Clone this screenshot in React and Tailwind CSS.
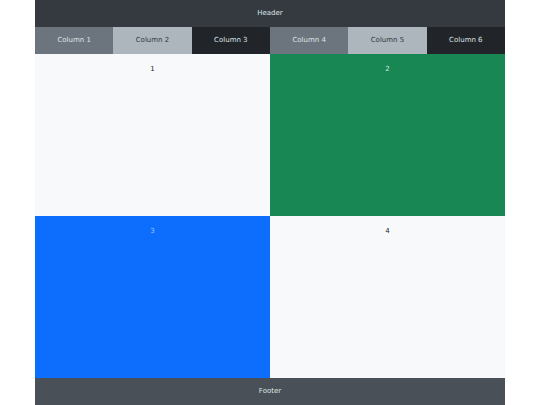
const columns = [
  { label: 'Column 1', cls: 'bg-[#6c757d] text-[#dee2e6]' },
  { label: 'Column 2', cls: 'bg-[#adb5bd] text-[#343a40]' },
  { label: 'Column 3', cls: 'bg-[#212529] text-[#dee2e6]' },
  { label: 'Column 4', cls: 'bg-[#6c757d] text-[#dee2e6]' },
  { label: 'Column 5', cls: 'bg-[#adb5bd] text-[#343a40]' },
  { label: 'Column 6', cls: 'bg-[#212529] text-[#dee2e6]' },
];

const cells = [
  { label: '1', cls: 'bg-[#f8f9fa] text-[#212529]' },
  { label: '2', cls: 'bg-[#198754] text-[#d1e7dd]' },
  { label: '3', cls: 'bg-[#0d6efd] text-[#9ec5fe]' },
  { label: '4', cls: 'bg-[#f8f9fa] text-[#212529]' },
];

export default function App() {
  return (
    <div className="min-h-[405px] bg-white font-['DejaVu_Sans',sans-serif] text-[7px]">
      <div className="mx-auto flex h-[405px] w-[470px] flex-col">
        {/* Header */}
        <div className="flex h-[27px] items-center justify-center bg-[#343a40] text-[#dee2e6]">
          Header
        </div>

        {/* Columns */}
        <div className="grid h-[27px] grid-cols-6">
          {columns.map((col) => (
            <div key={col.label} className={`flex items-center justify-center ${col.cls}`}>
              {col.label}
            </div>
          ))}
        </div>

        {/* Content grid */}
        <div className="grid flex-1 grid-cols-2 grid-rows-2">
          {cells.map((cell) => (
            <div key={cell.label} className={`pt-[10px] text-center ${cell.cls}`}>
              {cell.label}
            </div>
          ))}
        </div>

        {/* Footer */}
        <div className="flex h-[27px] items-center justify-center bg-[#495057] text-[#dee2e6]">
          Footer
        </div>
      </div>
    </div>
  );
}
